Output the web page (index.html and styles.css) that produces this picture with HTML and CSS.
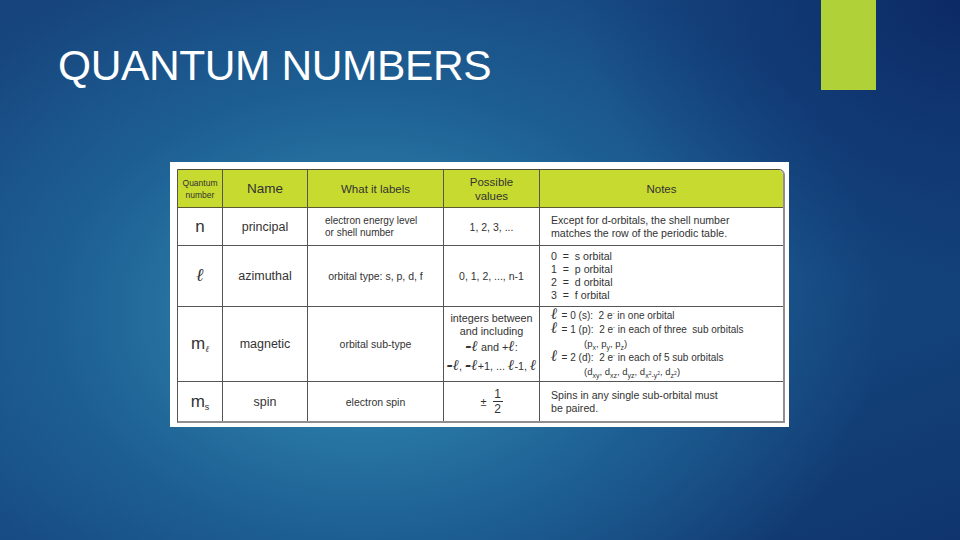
FILE: index.html
```html
<!DOCTYPE html>
<html>
<head>
<meta charset="utf-8">
<link rel="stylesheet" href="styles.css">
</head>
<body>
<div class="slide">
  <header class="top">
    <h1 class="title">QUANTUM NUMBERS</h1>
    <div class="accent"></div>
  </header>
  <div class="card">
    <table class="qtable">
      <colgroup>
        <col class="c1"><col class="c2"><col class="c3"><col class="c4"><col class="c5">
      </colgroup>
      <tr class="r-head">
        <th class="h-small">Quantum<br>number</th>
        <th class="h-name">Name</th>
        <th>What it labels</th>
        <th>Possible<br>values</th>
        <th class="h-last">Notes</th>
      </tr>
      <tr class="r1">
        <td class="sym">n</td>
        <td class="nm">principal</td>
        <td class="lab">electron energy level<br>or shell number</td>
        <td class="val">1, 2, 3, ...</td>
        <td class="note">Except for d-orbitals, the shell number<br>matches the row of the periodic table.</td>
      </tr>
      <tr class="r2">
        <td class="sym"><span class="ell big">ℓ</span></td>
        <td class="nm">azimuthal</td>
        <td class="lab center">orbital type: s, p, d, f</td>
        <td class="val">0, 1, 2, ..., n-1</td>
        <td class="note lines">0 &nbsp;=&nbsp; s orbital<br>1 &nbsp;=&nbsp; p orbital<br>2 &nbsp;=&nbsp; d orbital<br>3 &nbsp;=&nbsp; f orbital</td>
      </tr>
      <tr class="r3">
        <td class="sym">m<sub class="ell sm">ℓ</sub></td>
        <td class="nm">magnetic</td>
        <td class="lab center">orbital sub-type</td>
        <td class="val vals">
          <div class="ln">integers between</div>
          <div class="ln">and including</div>
          <div class="ln lv"><span class="ell">-ℓ</span> and +<span class="ell">ℓ</span>:</div>
          <div class="ln lv"><span class="ell">-ℓ</span>, <span class="ell">-ℓ</span>+1, ... <span class="ell">ℓ</span>-1, <span class="ell">ℓ</span></div>
        </td>
        <td class="note sub">
          <div class="ln"><span class="ell">ℓ</span> = 0 (s): &nbsp;2 e<sup>-</sup> in one orbital</div>
          <div class="ln"><span class="ell">ℓ</span> = 1 (p): &nbsp;2 e<sup>-</sup> in each of three &nbsp;sub orbitals</div>
          <div class="ln ind">(p<sub>x</sub>, p<sub>y</sub>, p<sub>z</sub>)</div>
          <div class="ln"><span class="ell">ℓ</span> = 2 (d): &nbsp;2 e<sup>-</sup> in each of 5 sub orbitals</div>
          <div class="ln ind">(d<sub>xy</sub>, d<sub>xz</sub>, d<sub>yz</sub>, d<sub>x<sup>2</sup>-y<sup>2</sup></sub>, d<sub>z<sup>2</sup></sub>)</div>
        </td>
      </tr>
      <tr class="r4">
        <td class="sym">m<sub class="s">s</sub></td>
        <td class="nm">spin</td>
        <td class="lab center">electron spin</td>
        <td class="val"><span class="pm">±</span><span class="frac"><span>1</span><span class="bar"></span><span>2</span></span></td>
        <td class="note">Spins in any single sub-orbital must<br>be paired.</td>
      </tr>
    </table>
  </div>
</div>
</body>
</html>
```
FILE: styles.css
```css
html, body {
  margin: 0;
  padding: 0;
}
body {
  width: 960px;
  height: 540px;
  overflow: hidden;
  font-family: "Liberation Sans", Arial, sans-serif;
}
.slide {
  width: 960px;
  height: 540px;
  box-sizing: border-box;
  display: flex;
  flex-direction: column;
  background:
    radial-gradient(ellipse 520px 380px at 38% 58%, #2f8cb3 0%, #2877a4 30%, #1d5e92 60%, rgba(21,72,128,0) 100%),
    linear-gradient(160deg, #17447c 0%, #164a84 45%, #134179 75%, #10356e 100%);
  position: relative;
}
.slide::before {
  content: "";
  position: absolute;
  inset: 0;
  background: radial-gradient(ellipse 380px 300px at 100% 0%, rgba(10,36,96,0.85) 0%, rgba(10,36,96,0) 100%);
  pointer-events: none;
}
.top {
  display: flex;
  align-items: flex-start;
  height: 90px;
  position: relative;
}
.title {
  margin: 0;
  padding: 44px 0 0 58px;
  font-family: "Liberation Sans", Arial, sans-serif;
  font-weight: normal;
  font-size: 42.5px;
  line-height: 44px;
  color: #ffffff;
  letter-spacing: -0.4px;
}
.accent {
  margin-left: auto;
  margin-right: 84px;
  width: 55px;
  height: 90px;
  background: #b0d238;
}
.card {
  position: relative;
  margin: 72px 0 0 170px;
  width: 619px;
  height: 265px;
  box-sizing: border-box;
  background: #ffffff;
  padding: 7px 6px 5px 7px;
}
.qtable {
  table-layout: fixed;
  border-collapse: separate;
  border-spacing: 0;
  width: 607px;
  border-top: 1px solid #4b4b38;
  border-left: 1px solid #555;
  border-right: 2px solid #8f8f8f;
  border-bottom: 2px solid #8f8f8f;
  border-radius: 0 6px 0 0;
  color: #333333;
  font-family: "Liberation Sans", Arial, sans-serif;
}
.c1 { width: 45px; }
.c2 { width: 85px; }
.c3 { width: 136px; }
.c4 { width: 96px; }
.c5 { width: 243px; }
.qtable th, .qtable td {
  border-right: 1px solid #555555;
  border-bottom: 1px solid #555555;
  padding: 0;
  text-align: center;
  vertical-align: middle;
}
.qtable th:last-child, .qtable td:last-child {
  border-right: none;
}
.qtable tr:last-child td {
  border-bottom: none;
}
.r-head th {
  background: #c7da30;
  height: 37px;
  font-weight: normal;
  font-size: 11.5px;
  line-height: 14px;
  color: #333;
  border-bottom-color: #5a5a30;
}
.r-head th.h-last { border-top-right-radius: 5px; }
.r-head th.h-small { font-size: 8.5px; line-height: 12px; }
.r-head th.h-name { font-size: 13.5px; }
.r1 td { height: 37px; }
.r2 td { height: 60px; }
.r3 td { height: 74px; }
.r4 td { height: 39px; }
.sym {
  font-size: 17px;
  line-height: 20px;
  color: #333;
}
.sym sub {
  font-size: 9px;
  line-height: 0;
  vertical-align: -3px;
}
.ell {
  font-family: "DejaVu Serif", serif;
  font-style: italic;
  font-weight: bold;
  line-height: 0;
}
.ell.big { font-size: 18px; }
.ell.sm { font-size: 9px; }
.nm { font-size: 12.5px; }
.lab {
  font-size: 10px;
  line-height: 12px;
  text-align: left !important;
  padding-left: 17px !important;
}
.lab.center {
  text-align: center !important;
  padding-left: 0 !important;
  font-size: 10.5px;
}
.val { font-size: 10.5px; line-height: 12px; }
.ln { height: 13px; line-height: 13px; white-space: nowrap; }
.vals .lv { height: 19px; line-height: 19px; }
.vals .lv .ell { font-size: 15px; }
.vals .ln { font-size: 10.8px; }
.note {
  font-size: 10.6px;
  line-height: 13px;
  text-align: left !important;
  padding-left: 11px !important;
}
.note.lines { line-height: 13px; }
.note.sub .ln { height: 14px; line-height: 14px; font-size: 10px; }
.note.sub .ell { font-size: 16px; margin-right: 1px; }
.note.sub .ind { padding-left: 33px; font-size: 9.5px; }
sub, sup { line-height: 0; }
.note sub { font-size: 7px; }
.note sup { font-size: 6px; }
.note sub sup { font-size: 5px; }
.pm { font-size: 11px; margin-right: 6px; vertical-align: middle; }
.frac {
  display: inline-flex;
  flex-direction: column;
  align-items: center;
  vertical-align: middle;
  font-size: 12px;
  line-height: 14px;
}
.frac .bar {
  width: 10px;
  height: 1px;
  background: #333;
}
```
